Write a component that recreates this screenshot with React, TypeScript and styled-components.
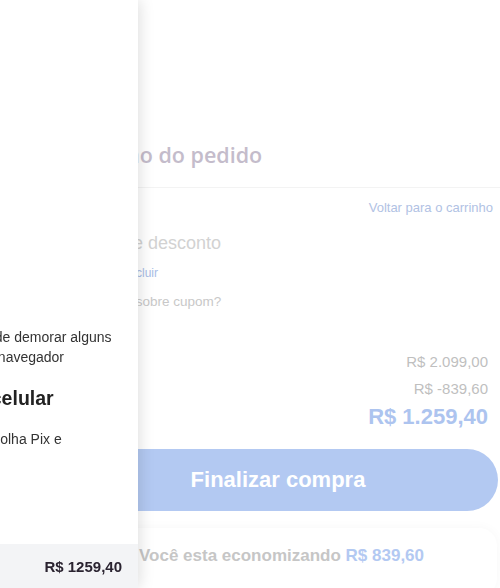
import React from "react";
import styled, { createGlobalStyle } from "styled-components";

const GlobalStyle = createGlobalStyle`
  html, body {
    margin: 0;
    padding: 0;
    background: #ffffff;
    overflow: hidden;
  }
  body {
    font-family: "Liberation Sans", Arial, sans-serif;
  }
`;

const Page = styled.div`
  width: 500px;
  height: 588px;
  overflow: hidden;
`;

const Summary = styled.section`
  margin-left: 58px;
  width: 442px;
  padding-top: 140px;
  display: flex;
  flex-direction: column;
`;

const SummaryHeader = styled.header`
  border-bottom: 1px solid #f3f3f3;
  padding: 0 0 17px 11px;
`;

const Title = styled.h2`
  margin: 0;
  font-family: "Open Sans", sans-serif;
  font-weight: 600;
  font-size: 21.5px;
  line-height: 30px;
  color: #c4bccb;
`;

const BackLink = styled.a`
  align-self: flex-end;
  margin: 12px 7px 0 0;
  font-size: 13px;
  line-height: 16px;
  color: #b1c2e4;
  text-decoration: none;
`;

const Coupon = styled.div`
  display: flex;
  flex-direction: column;
  padding-left: 2px;
  margin-top: 16px;
`;

const CouponTitle = styled.h3`
  margin: 0;
  font-weight: 400;
  font-size: 18px;
  line-height: 22px;
  color: #d2d2d2;
`;

const CouponRow = styled.div`
  display: flex;
  align-items: center;
  gap: 8px;
  margin-top: 11px;
`;

const CouponInput = styled.input`
  width: 58px;
  height: 14px;
  padding: 0;
  border: none;
  background: transparent;
`;

const CouponAdd = styled.a`
  font-size: 12px;
  line-height: 16px;
  color: #a9bde6;
`;

const CouponHelp = styled.p`
  margin: 13px 0 0 3px;
  font-size: 13.5px;
  line-height: 16px;
  color: #c8c8c8;
`;

const Totals = styled.div`
  display: flex;
  flex-direction: column;
  margin-top: 38px;
  padding: 0 12px 0 6px;
`;

const TotalRow = styled.div<{ $big?: boolean }>`
  display: flex;
  justify-content: space-between;
  align-items: center;
  height: ${(p) => (p.$big ? 30 : 27)}px;
`;

const TotalLabel = styled.span`
  font-size: 15px;
  color: #c3c3c3;
`;

const TotalValue = styled.span<{ $big?: boolean }>`
  font-size: ${(p) => (p.$big ? 22 : 15)}px;
  font-weight: ${(p) => (p.$big ? 700 : 400)};
  color: ${(p) => (p.$big ? "#adc4ef" : "#bfbfbf")};
`;

const CheckoutButton = styled.button`
  margin: 17px 2px 0 0;
  height: 62px;
  border: none;
  border-radius: 31px;
  background: #b3c9f2;
  color: #ffffff;
  font-family: "Liberation Sans", Arial, sans-serif;
  font-weight: 700;
  font-size: 22px;
`;

const SavingsBox = styled.div`
  margin: 17px 3px 0 8px;
  padding: 18px 0 30px;
  border-radius: 18px;
  background: #ffffff;
  box-shadow: 0 0 12px rgba(0, 0, 0, 0.035);
  text-align: center;
  font-weight: 700;
  font-size: 17px;
  line-height: 20px;
  color: #c6c6c6;
`;

const SavingsAmount = styled.span`
  color: #b3c9f2;
`;

const Drawer = styled.aside`
  position: fixed;
  top: 0;
  bottom: 0;
  left: -162px;
  width: 300px;
  background: #ffffff;
  box-shadow: 2px 0 14px rgba(0, 0, 0, 0.13);
  display: flex;
  flex-direction: column;
`;

const DrawerBody = styled.div`
  flex: 1;
  padding: 327px 0 0 26px;
  white-space: nowrap;
  color: #333333;
`;

const DrawerText = styled.p`
  margin: 0;
  font-size: 14px;
  line-height: 20px;
`;

const DrawerHeading = styled.h3`
  margin: 19px 0;
  font-size: 19.5px;
  line-height: 24px;
  font-weight: 700;
  color: #222222;
`;

const DrawerFooter = styled.footer`
  height: 44px;
  display: flex;
  align-items: center;
  justify-content: flex-end;
  padding-right: 16px;
  background: #f3f4f6;
  font-weight: 700;
  font-size: 15px;
  color: #2a2330;
`;

export default function App() {
  return (
    <>
      <GlobalStyle />
      <Page>
        <Summary>
          <SummaryHeader>
            <Title>Resumo do pedido</Title>
          </SummaryHeader>
          <BackLink href="#">Voltar para o carrinho</BackLink>
          <Coupon>
            <CouponTitle>Cupom de desconto</CouponTitle>
            <CouponRow>
              <CouponInput aria-label="Código do cupom" />
              <CouponAdd>Incluir</CouponAdd>
            </CouponRow>
            <CouponHelp>Tem dúvida sobre cupom?</CouponHelp>
          </Coupon>
          <Totals>
            <TotalRow>
              <TotalLabel>Subtotal</TotalLabel>
              <TotalValue>R$ 2.099,00</TotalValue>
            </TotalRow>
            <TotalRow>
              <TotalLabel>Descontos</TotalLabel>
              <TotalValue>R$ -839,60</TotalValue>
            </TotalRow>
            <TotalRow $big>
              <TotalLabel>Total</TotalLabel>
              <TotalValue $big>R$ 1.259,40</TotalValue>
            </TotalRow>
          </Totals>
          <CheckoutButton>Finalizar compra</CheckoutButton>
          <SavingsBox>
            Você esta economizando <SavingsAmount>R$ 839,60</SavingsAmount>
          </SavingsBox>
        </Summary>
      </Page>
      <Drawer>
        <DrawerBody>
          <DrawerText>
            O seu pagamento pode demorar alguns
            <br />
            minutos, não feche o navegador
          </DrawerText>
          <DrawerHeading>Pague com o celular</DrawerHeading>
          <DrawerText>
            No app do banco, escolha Pix e
            <br />
            copie o código.
          </DrawerText>
        </DrawerBody>
        <DrawerFooter>R$ 1259,40</DrawerFooter>
      </Drawer>
    </>
  );
}
